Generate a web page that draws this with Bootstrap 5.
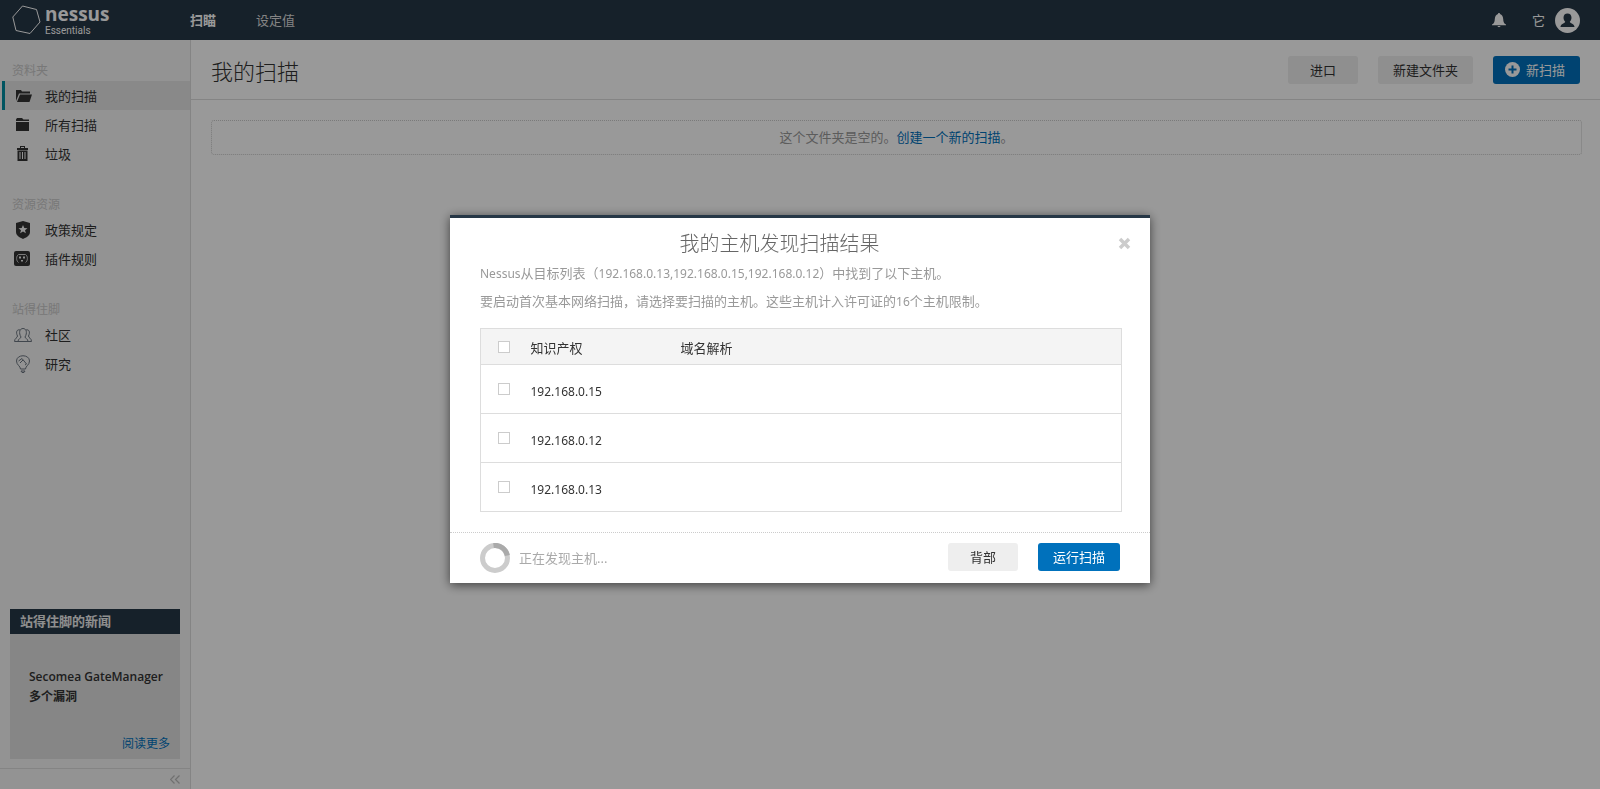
<!DOCTYPE html>
<html lang="zh-CN">
<head>
<meta charset="utf-8">
<meta name="viewport" content="width=device-width, initial-scale=1">
<title>Nessus Essentials</title>
<link href="https://cdn.jsdelivr.net/npm/bootstrap@5.3.0/dist/css/bootstrap.min.css" rel="stylesheet">
<style>
  :root { --navy: #263746; --brand: #0071bc; --line: #ddd; }
  body { font-family: "Noto Sans", "Noto Sans CJK SC", sans-serif; font-size: 13px; line-height: 20px; color: #333; }
  .cjk-light { font-family: "Noto Sans CJK SC", sans-serif; font-weight: 300; }
  a { color: var(--brand); text-decoration: none; }
  .latin { font-size: 12px; }
  .topbar { background: var(--navy); height: 40px; color: #fff; }
  .brand-area { width: 190px; padding-left: 12px; }
  .brand-name { font: 700 19px/22px "Open Sans", sans-serif; }
  .brand-sub { font: 400 10px/12px Roboto, sans-serif; }
  .topbar .nav-link { color: #ddd; padding: 0; margin-right: 40px; line-height: 22px; }
  .topbar .nav-link.active { color: #fff; font-weight: 700; }
  .user-mark { padding: 0 10px 0 26px; }
  .sidebar { width: 191px; background: #f5f5f5; border-right: 1px solid var(--line); }
  .side-nav { padding-top: 21px; }
  .side-title { font-size: 12px; line-height: 20px; color: #c8c8c8; padding: 0 12px; margin: 0; font-weight: 400; }
  .side-group { margin-bottom: 27px; }
  .side-link { display: flex; align-items: center; height: 29px; padding-left: 10px; color: #333; border-left: 3px solid transparent; margin-left: 2px; }
  .side-link.active { background: #e4e4e4; border-color: #008ca0; }
  .side-link svg { width: 18px; height: 18px; margin-right: 12px; }
  .news { margin: 0 10px 9px; background: #dfdfdf; }
  .news-head { background: var(--navy); color: #eee; font-size: 13px; line-height: 25px; padding: 0 10px; margin: 0; font-weight: 700; }
  .news-body { height: 125px; padding: 33px 10px 5px 19px; font: 600 12px/20px "Open Sans", "Noto Sans CJK SC", sans-serif; }
  .collapse-bar { height: 21px; border-top: 1px solid var(--line); padding-right: 10px; }
  .page-head { height: 60px; border-bottom: 1px solid var(--line); padding: 0 20px; }
  .page-head h1 { font-size: 22px; line-height: 32px; color: #333; }
  .btn-row { gap: 20px; }
  .btn-app { font-size: 13px; line-height: 20px; padding: 4px 15px; border: 0; border-radius: 3px; background: #eee; color: #333; min-width: 70px; }
  .btn-run { background: var(--brand); color: #fff; }
  .btn-new { padding: 4px 15px 4px 12px; }
  .btn-new svg { margin-right: 6px; }
  .empty-box { margin: 20px 18px 20px 20px; border: 1px dotted #ccc; border-radius: 3px; line-height: 33px; color: #999; text-align: center; }
  .modal-backdrop.show { opacity: .4; }
  .modal-hosts { max-width: 700px; margin: 215px auto 0; }
  .modal-hosts .modal-content { border: 0; border-top: 3px solid var(--navy); border-radius: 0; box-shadow: 0 2px 10px rgba(0,0,0,.6); }
  .modal-hosts .modal-header { padding: 11px 19px 0 30px; border: 0; }
  .modal-hosts .modal-title { font-size: 20px; line-height: 28px; color: #666; padding-right: 39px; }
  .close-x { border: 0; background: none; padding: 0; line-height: 0; }
  .modal-hosts .modal-body { padding: 6px 28px 20px 30px; color: #999; }
  .modal-hosts .modal-body p { margin: 0 0 7px; }
  .hosts { border: 1px solid var(--line); margin: 16px 0 0; color: #333; width: 100%; }
  .hosts th, .hosts td { border-bottom: 1px solid var(--line); height: 49px; padding: 4px 0 0; vertical-align: middle; }
  .hosts th { background: #f4f4f4; font-weight: 400; height: 36px; padding-top: 3px; }
  .hosts .pick { width: 50px; padding: 0 0 0 17px; line-height: 0; }
  .hosts .addr { width: 150px; }
  .hosts .form-check-input { width: 12px; height: 12px; margin: 0; border: 1px solid #ccc; border-radius: 0; }
  .modal-hosts .modal-footer { border-top: 1px dotted #ccc; padding: 10px 30px 10px; }
  .modal-hosts .modal-footer > * { margin: 0; }
  .progress-note { color: #aaa; gap: 9px; }
</style>
<script src="https://cdn.jsdelivr.net/npm/bootstrap@5.3.0/dist/js/bootstrap.bundle.min.js"></script>
</head>
<body class="d-flex flex-column vh-100 overflow-hidden">
<header class="topbar d-flex align-items-center flex-shrink-0">
  <a href="#" class="brand-area d-flex align-items-center text-white">
    <svg width="29" height="30" viewBox="0 0 29 30" fill="none" stroke="#fff" stroke-width="1"><path d="M10.500 1l14 3.500L28 17 18 28.500 4 25.500 .8 12z"/></svg>
    <span class="ms-1"><span class="brand-name d-block">nessus</span><span class="brand-sub d-block">Essentials</span></span>
  </a>
  <nav class="nav flex-grow-1"><a class="nav-link active" href="#">扫瞄</a><a class="nav-link" href="#">设定值</a></nav>
  <div class="d-flex align-items-center pe-3 me-1">
    <svg width="14" height="15" viewBox="0 0 14 15" fill="#fff"><path d="M7 0c.7 0 1 .4 1 1 2 .6 3 2.400 3.200 5 .1 3 .8 4.500 2.800 5.500v.8H0v-.8c2-1 2.700-2.500 2.800-5.500C3 3.400 4 1.600 6 1c0-.6.3-1 1-1zM5.500 13h3c-.2 1.500-2.800 1.500-3 0z"/></svg>
    <span class="user-mark">它</span>
    <svg width="25" height="25" viewBox="0 0 25 25"><circle cx="12.500" cy="12.500" r="12.500" fill="#fff"/><path fill="#263746" d="M12.500 5.500c2.500 0 4 1.500 4 4.200 0 2-1 3-1.700 4 0 1.800 4.700 1.800 4.700 5.300h-14c0-3.500 4.700-3.500 4.700-5.300-.7-1-1.700-2-1.700-4 0-2.700 1.500-4.200 4-4.200z"/></svg>
  </div>
</header>
<div class="d-flex flex-grow-1">
  <aside class="sidebar d-flex flex-column flex-shrink-0">
    <nav class="side-nav flex-grow-1">
      <div class="side-group">
        <h2 class="side-title">资料夹</h2>
        <a class="side-link active" href="#"><svg viewBox="0 0 18 18" fill="#333"><path d="M1 3h5l1 1.500h8v2H4L1 14zM5 7.500h12L14.500 15H2z"/></svg>我的扫描</a>
        <a class="side-link" href="#"><svg viewBox="0 0 18 18" fill="#333"><path d="M1 3.500l1-1.500h5l1.500 1.500H14V5H1zM1 6h13v9H1z"/></svg>所有扫描</a>
        <a class="side-link" href="#"><svg viewBox="0 0 18 18" fill="#333"><path fill-rule="evenodd" d="M5 3V1h5v2h3v2H2V3zM6 3h3V2H6zM2.500 5.500h10V16h-10zM4.500 7v7h1V7zM7 7v7h1V7zm2.500 0v7h1V7z"/></svg>垃圾</a>
      </div>
      <div class="side-group">
        <h2 class="side-title">资源资源</h2>
        <a class="side-link" href="#"><svg viewBox="0 0 18 18"><path fill="#333" d="M8 0l7 2v9c0 4-5 6-7 7-2-1-7-3-7-7V2z"/><path fill="#f5f5f5" d="M8 4l1.300 3 3.200.2-2.500 2 .9 3.100L8 10.600l-2.900 1.700.9-3.100-2.500-2L6.700 7z"/></svg>政策规定</a>
        <a class="side-link" href="#"><svg class="overflow-visible" viewBox="0 0 18 18"><rect x="-1" y="1" width="16" height="15" rx="2" fill="#333"/><path d="M3.500 4.500C1 6 1 11 3.500 12.500M10.500 4.500c2.500 1.500 2.500 6.500 0 8M3.500 4.500h7" stroke="#ccc" fill="none"/><path d="M4 6.500h2v2H4zm4 0h2v2H8zM6 10h2v1.500H6z" fill="#eee"/></svg>插件规则</a>
      </div>
      <div class="side-group">
        <h2 class="side-title">站得住脚</h2>
        <a class="side-link" href="#"><svg class="overflow-visible" viewBox="0 0 18 18" fill="none" stroke="#6c7580"><path d="M3 15.500c0-3 3-3 3-4.500C3.500 7 4.500 2.500 8 2.500s4.500 4.500 2 8.500c0 1.500 3 1.500 3 4.500zM5 4C2 3 .5 6 2.500 10 2.500 12-.5 12-.5 15.500H3M11 4c3-1 4.500 2 2.500 6 0 2 3 2 3 5.500H13"/></svg>社区</a>
        <a class="side-link" href="#"><svg viewBox="0 0 18 18" fill="none" stroke="#6c7580"><path d="M5.500 14c0-3-4-4-4-8 0-7 13-7 13 0 0 4-4 5-4 8zM6 16h4l-1 1.500H7zM3.500 6l3.500-2.500L11.500 9M5 8l3-3M10 10l1.500-1"/></svg>研究</a>
      </div>
    </nav>
    <section class="news">
      <h2 class="news-head">站得住脚的新闻</h2>
      <div class="news-body d-flex flex-column justify-content-between">
        <div>Secomea GateManager<br>多个漏洞</div>
        <a href="#" class="align-self-end fw-normal">阅读更多</a>
      </div>
    </section>
    <div class="collapse-bar d-flex align-items-center justify-content-end">
      <svg width="10" height="9" viewBox="0 0 10 9" fill="none" stroke="#bbb" stroke-width="1.200"><path d="M4.500.5l-4 4 4 4M9.500.5l-4 4 4 4"/></svg>
    </div>
  </aside>
  <main class="flex-grow-1">
    <div class="page-head d-flex align-items-center">
      <h1 class="cjk-light m-0 me-auto">我的扫描</h1>
      <div class="d-flex btn-row">
        <button type="button" class="btn btn-app">进口</button>
        <button type="button" class="btn btn-app">新建文件夹</button>
        <button type="button" class="btn btn-app btn-run btn-new d-flex align-items-center"><svg width="15" height="15" viewBox="0 0 15 15"><circle cx="7.500" cy="7.500" r="7.500" fill="#fff"/><path d="M7.500 3.500v8M3.500 7.500h8" stroke="#0071bc" stroke-width="2"/></svg>新扫描</button>
      </div>
    </div>
    <div class="empty-box">这个文件夹是空的。<a href="#">创建一个新的扫描</a>。</div>
  </main>
</div>
<div class="modal-backdrop show"></div>
<div class="modal show d-block" role="dialog" aria-labelledby="hosts-title">
  <div class="modal-dialog modal-hosts">
    <div class="modal-content">
      <div class="modal-header">
        <h2 id="hosts-title" class="modal-title cjk-light flex-grow-1 text-center">我的主机发现扫描结果</h2>
        <button type="button" class="close-x" aria-label="关闭"><svg width="13" height="13" viewBox="0 0 13 13" stroke="#ccc" stroke-width="3.500"><path d="M2 2l9 9M11 2l-9 9"/></svg></button>
      </div>
      <div class="modal-body">
        <p><span class="latin">Nessus</span>从目标列表（<span class="latin">192.168.0.13,192.168.0.15,192.168.0.12</span>）中找到了以下主机。</p>
        <p>要启动首次基本网络扫描，请选择要扫描的主机。这些主机计入许可证的<span class="latin">16</span>个主机限制。</p>
        <table class="hosts">
          <thead><tr><th class="pick"><input class="form-check-input" type="checkbox" aria-label="全选"></th><th class="addr">知识产权</th><th>域名解析</th></tr></thead>
          <tbody>
            <tr><td class="pick"><input class="form-check-input" type="checkbox" id="h15"></td><td class="addr"><label class="latin" for="h15">192.168.0.15</label></td><td></td></tr>
            <tr><td class="pick"><input class="form-check-input" type="checkbox" id="h12"></td><td class="addr"><label class="latin" for="h12">192.168.0.12</label></td><td></td></tr>
            <tr><td class="pick"><input class="form-check-input" type="checkbox" id="h13"></td><td class="addr"><label class="latin" for="h13">192.168.0.13</label></td><td></td></tr>
          </tbody>
        </table>
      </div>
      <div class="modal-footer justify-content-between align-items-start">
        <div class="progress-note d-flex align-items-center" role="status">
          <svg width="30" height="30" viewBox="0 0 30 30" fill="none" stroke-width="5"><circle cx="15" cy="15" r="12.500" stroke="#ccc"/><path d="M13.500 2.500A12.500 12.500 0 0 1 27.400 12.500" stroke="#aaa"/></svg>
          <span>正在发现主机...</span>
        </div>
        <div class="d-flex btn-row">
          <button type="button" class="btn btn-app">背部</button>
          <button type="button" class="btn btn-app btn-run">运行扫描</button>
        </div>
      </div>
    </div>
  </div>
</div>
</body>
</html>
